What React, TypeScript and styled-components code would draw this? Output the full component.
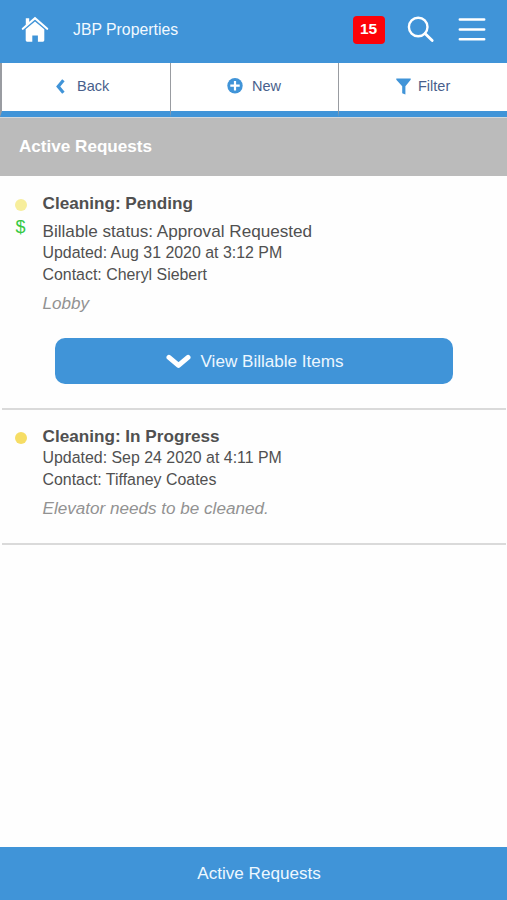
import React from "react";
import styled, { createGlobalStyle } from "styled-components";

const blue = "#4094d8";

const GlobalStyle = createGlobalStyle`
  * { box-sizing: border-box; }
  body { margin: 0; background: #fefefe; font-family: "Liberation Sans", Arial, sans-serif; color: #505050; }
  button { font-family: inherit; border: 0; padding: 0; background: none; }
`;

const Screen = styled.div`
  display: flex;
  flex-direction: column;
  height: 900px;
  overflow: hidden;
`;

const Header = styled.header`
  display: flex;
  align-items: center;
  flex: none;
  height: 63px;
  padding: 0 21px;
  padding-bottom: 4px;
  background: ${blue};
  color: #f2f9ff;
  svg { display: block; flex: none; }
`;

const AppTitle = styled.h1`
  flex: 1;
  margin: 1px 0 0 24px;
  font-size: 15.8px;
  font-weight: 400;
`;

const Badge = styled.span`
  width: 32px;
  height: 28px;
  margin-right: 22.5px;
  border-radius: 4px;
  background: #fd0209;
  color: #fff;
  font-size: 15.5px;
  font-weight: 700;
  line-height: 26px;
  text-align: center;
`;

const HeaderButton = styled.button<{ $gap?: number }>`
  margin-right: ${(p) => p.$gap ?? 0}px;
`;

const Nav = styled.nav`
  display: flex;
  flex: none;
  height: 54px;
  background: #fff;
`;

const NavButton = styled.button<{ $width: number; $edge: number; $pad: number; $gap: number }>`
  display: flex;
  align-items: center;
  width: ${(p) => p.$width}px;
  padding-left: ${(p) => p.$pad}px;
  padding-bottom: 2px;
  gap: ${(p) => p.$gap}px;
  border-left: ${(p) => p.$edge}px solid #999ca1;
  border-bottom: 6px solid ${blue};
  color: #485f8c;
  font-size: 14.5px;
  svg { display: block; flex: none; }
`;

const SectionBar = styled.h2`
  flex: none;
  height: 59px;
  margin: 0;
  padding-left: 19px;
  border-top: 1px solid #d2d8dd;
  background: #bbb;
  color: #fff;
  font-size: 17.1px;
  line-height: 58px;
`;

const Request = styled.article<{ $height: number; $top: number }>`
  display: flex;
  flex: none;
  height: ${(p) => p.$height}px;
  margin: 0 1px 0 2px;
  padding-top: ${(p) => p.$top}px;
  border-bottom: 2px solid #dadada;
`;

const Markers = styled.div`
  display: flex;
  flex-direction: column;
  align-items: center;
  width: 37px;
  margin-right: 3.5px;
  padding-top: 7px;
`;

const Dot = styled.span<{ $color: string }>`
  width: 12px;
  height: 12px;
  border-radius: 50%;
  background: ${(p) => p.$color};
`;

const Dollar = styled.span`
  margin-top: 6px;
  color: #35c943;
  font-size: 18px;
  line-height: 20px;
`;

const Details = styled.div`
  flex: 1;
  white-space: nowrap;
`;

const Title = styled.h3`
  margin: 0;
  font-size: 17.15px;
  line-height: 22px;
`;

const Line = styled.p<{ $size?: number; $height?: number; $space?: number }>`
  margin: ${(p) => p.$space ?? 0}px 0 0;
  font-size: ${(p) => p.$size ?? 15.92}px;
  line-height: ${(p) => p.$height ?? 22}px;
`;

const Note = styled.p`
  margin: 7px 0 0;
  color: #929292;
  font-size: 17.1px;
  font-style: italic;
  line-height: 22px;
`;

const BillableButton = styled.button`
  display: flex;
  align-items: center;
  width: 398px;
  height: 46px;
  margin: 23px 0 0 12px;
  padding: 1px 0 0 111px;
  gap: 10px;
  border-radius: 10px;
  background: ${blue};
  color: #edf7ff;
  font-size: 17.1px;
`;

const Footer = styled.footer`
  flex: none;
  height: 53px;
  margin-top: auto;
  padding-left: 11px;
  background: ${blue};
  color: #eef8ff;
  font-size: 17.1px;
  line-height: 53px;
  text-align: center;
`;

const HomeIcon = () => (
  <svg width="28" height="27" viewBox="0 0 28 27" fill="none">
    <path d="M4.8 2.2h3.4v4.2l-3.4 3z" fill="#fff" />
    <path d="M1.8 12.8 14 2.2l12.2 10.6" stroke="#fff" strokeWidth="2.1" strokeLinecap="round" />
    <path d="M4.7 13.3 14 5.4l9.3 7.9v11q0 1.4-1.4 1.4h-5v-6.2h-5.6v6.2H6.1q-1.4 0-1.4-1.4z" fill="#fff" />
  </svg>
);

const SearchIcon = () => (
  <svg width="28" height="28" viewBox="0 0 28 28" fill="none" stroke="#fff" strokeLinecap="round">
    <circle cx="11.2" cy="11" r="9.3" strokeWidth="2.4" />
    <path d="m18 17.4 7.2 7" strokeWidth="2.8" />
  </svg>
);

const MenuIcon = () => (
  <svg width="28" height="26" viewBox="0 0 28 26" stroke="#fff" strokeWidth="2.5" strokeLinecap="round">
    <path d="M1.8 2.4h24.4M1.8 12.4h24.4M1.8 22.2h24.4" />
  </svg>
);

const BackIcon = () => (
  <svg width="9" height="15" viewBox="0 0 9 15" fill="none" stroke={blue} strokeWidth="3.2">
    <path d="M7.4 1.2 2.2 7.5l5.2 6.3" />
  </svg>
);

const NewIcon = () => (
  <svg width="16" height="16" viewBox="0 0 16 16">
    <circle cx="8" cy="7.7" r="7.7" fill={blue} />
    <path d="M8 3v9.4M3.3 7.7h9.4" stroke="#fff" strokeWidth="2.2" />
  </svg>
);

const FilterIcon = () => (
  <svg width="15" height="17" viewBox="0 0 15 17">
    <path d="M.3.5h14.4v1.3L9.4 8.2v8.3l-3.2-1.3v-7L.3 1.8z" fill={blue} />
  </svg>
);

const ChevronIcon = () => (
  <svg width="25" height="15" viewBox="0 0 25 15" fill="none">
    <path d="m3 3.4 9.5 8L22 3.4" stroke="#fff" strokeWidth="5" strokeLinecap="round" strokeLinejoin="round" />
  </svg>
);

export default function App() {
  return (
    <Screen>
      <GlobalStyle />
      <Header>
        <HomeIcon />
        <AppTitle>JBP Properties</AppTitle>
        <Badge>15</Badge>
        <HeaderButton $gap={23} aria-label="Search"><SearchIcon /></HeaderButton>
        <HeaderButton aria-label="Menu"><MenuIcon /></HeaderButton>
      </Header>
      <Nav>
        <NavButton $width={170} $edge={2} $pad={54} $gap={12}><BackIcon />Back</NavButton>
        <NavButton $width={168} $edge={1} $pad={56} $gap={9}><NewIcon />New</NavButton>
        <NavButton $width={169} $edge={1} $pad={57} $gap={7}><FilterIcon />Filter</NavButton>
      </Nav>
      <SectionBar>Active Requests</SectionBar>
      <main>
        <Request $height={234} $top={16}>
          <Markers>
            <Dot $color="#f7ee9c" />
            <Dollar>$</Dollar>
          </Markers>
          <Details>
            <Title>Cleaning: Pending</Title>
            <Line $size={17.15} $height={21} $space={7}>Billable status: Approval Requested</Line>
            <Line $height={21}>Updated: Aug 31 2020 at 3:12 PM</Line>
            <Line $space={1}>Contact: Cheryl Siebert</Line>
            <Note>Lobby</Note>
            <BillableButton><ChevronIcon />View Billable Items</BillableButton>
          </Details>
        </Request>
        <Request $height={135} $top={15}>
          <Markers>
            <Dot $color="#f6dd65" />
          </Markers>
          <Details>
            <Title>Cleaning: In Progress</Title>
            <Line $height={21}>Updated: Sep 24 2020 at 4:11 PM</Line>
            <Line $space={1}>Contact: Tiffaney Coates</Line>
            <Note>Elevator needs to be cleaned.</Note>
          </Details>
        </Request>
      </main>
      <Footer>Active Requests</Footer>
    </Screen>
  );
}
